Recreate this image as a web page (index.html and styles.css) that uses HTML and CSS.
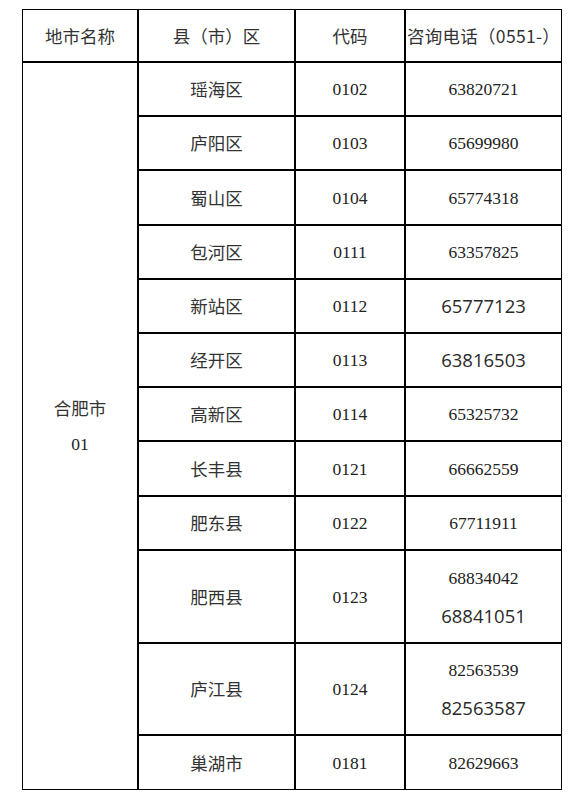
FILE: index.html
```html
<!DOCTYPE html>
<html lang="zh">
<head>
<meta charset="utf-8">
<link rel="stylesheet" href="styles.css">
</head>
<body>
<table class="tbl">
  <tr class="r-head">
    <td class="c1 zh">地市名称</td>
    <td class="c2 zh">县（市）区</td>
    <td class="c3 zh">代码</td>
    <td class="c4 zh head-tel">咨询电话（0551-）</td>
  </tr>
  <tr class="r54">
    <td class="c1 merged" rowspan="12"><div class="zh ml">合肥市</div><div class="serif ml">01</div></td>
    <td class="c2 zh">瑶海区</td><td class="c3 serif">0102</td><td class="c4 serif">63820721</td>
  </tr>
  <tr class="r54"><td class="c2 zh">庐阳区</td><td class="c3 serif">0103</td><td class="c4 serif">65699980</td></tr>
  <tr class="r55"><td class="c2 zh">蜀山区</td><td class="c3 serif">0104</td><td class="c4 serif">65774318</td></tr>
  <tr class="r54"><td class="c2 zh">包河区</td><td class="c3 serif">0111</td><td class="c4 serif">63357825</td></tr>
  <tr class="r54"><td class="c2 zh">新站区</td><td class="c3 serif">0112</td><td class="c4 sans">65777123</td></tr>
  <tr class="r54"><td class="c2 zh">经开区</td><td class="c3 serif">0113</td><td class="c4 sans">63816503</td></tr>
  <tr class="r54"><td class="c2 zh">高新区</td><td class="c3 serif">0114</td><td class="c4 serif">65325732</td></tr>
  <tr class="r55"><td class="c2 zh">长丰县</td><td class="c3 serif">0121</td><td class="c4 serif">66662559</td></tr>
  <tr class="r54"><td class="c2 zh">肥东县</td><td class="c3 serif">0122</td><td class="c4 serif">67711911</td></tr>
  <tr class="r93"><td class="c2 zh">肥西县</td><td class="c3 serif">0123</td><td class="c4"><div class="serif ml">68834042</div><div class="sans ml">68841051</div></td></tr>
  <tr class="r92"><td class="c2 zh">庐江县</td><td class="c3 serif">0124</td><td class="c4"><div class="serif ml">82563539</div><div class="sans ml">82563587</div></td></tr>
  <tr class="r-last"><td class="c2 zh">巢湖市</td><td class="c3 serif">0181</td><td class="c4 serif">82629663</td></tr>
</table>
</body>
</html>
```

FILE: styles.css
```css
html, body {
  margin: 0;
  padding: 0;
  background: #ffffff;
}
body {
  padding: 9px 0 0 22px;
}
.tbl {
  border-collapse: separate;
  border-spacing: 0;
  border: 1px solid #000;
  width: 540px;
  table-layout: fixed;
  color: #333;
}
.tbl td {
  padding: 0;
  text-align: center;
  vertical-align: middle;
  border-right: 2px solid #000;
  border-bottom: 2px solid #000;
  box-sizing: border-box;
}
.tbl td.c4 { border-right: none; }
.tbl td.merged { border-bottom: none; }
.tbl tr.r-last td { border-bottom: none; }
.c1 { width: 116px; }
.c2 { width: 157px; }
.c3 { width: 110px; }
.c4 { width: 155px; }
.r-head { height: 53px; }
.r54 { height: 54px; }
.r55 { height: 55px; }
.r93 { height: 93px; }
.r92 { height: 92px; }
.r-last { height: 53px; }
.zh {
  font-family: "Noto Sans CJK SC", "Noto Sans", sans-serif;
  font-size: 17.5px;
  line-height: 24px;
}
.head-tel {
  letter-spacing: 0.3px;
  white-space: nowrap;
}
.serif {
  font-family: "Liberation Serif", serif;
  font-size: 17.5px;
  line-height: 24px;
  color: #222;
}
.sans {
  font-family: "Open Sans", sans-serif;
  font-size: 18.5px;
  line-height: 24px;
  color: #2a2a2a;
}
.ml {
  line-height: 37px;
}
.c4 .ml {
  line-height: 38px;
}
```
